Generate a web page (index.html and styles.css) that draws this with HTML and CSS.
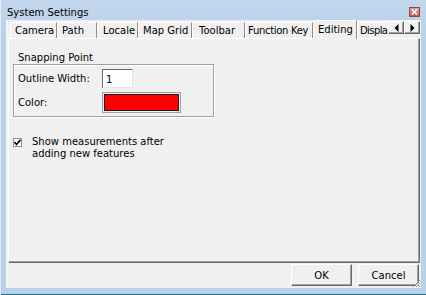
FILE: index.html
```html
<!DOCTYPE html>
<html>
<head>
<meta charset="utf-8">
<link rel="stylesheet" href="styles.css">
</head>
<body>
<div class="window">
  <div class="titlebar">
    <span class="title">System Settings</span>
    <span class="close"><svg width="9" height="8" viewBox="0 0 9 8"><path d="M2 1.5 L7 6.5 M7 1.5 L2 6.5" stroke="#fff" stroke-width="1.6"/></svg></span>
  </div>
  <div class="client">
    <div class="tabstrip">
      <div class="tab t-camera">Camera</div>
      <div class="tab t-path">Path</div>
      <div class="tab t-locale">Locale</div>
      <div class="tab t-map">Map Grid</div>
      <div class="tab t-toolbar">Toolbar</div>
      <div class="tab t-fkey">Function Key</div>
      <div class="tab active t-edit">Editing</div>
      <div class="tab t-disp">Displa</div>
      <div class="scroller">
        <span class="arrow"><svg width="5" height="8" viewBox="0 0 5 8"><path d="M4.5 0 L0.5 4 L4.5 8 Z" fill="#000"/></svg></span>
        <span class="arrow"><svg width="5" height="8" viewBox="0 0 5 8"><path d="M0.5 0 L4.5 4 L0.5 8 Z" fill="#000"/></svg></span>
      </div>
    </div>
    <div class="panel">
      <div class="group-label">Snapping Point</div>
      <div class="group">
        <div class="row">
          <span class="field-label">Outline Width:</span>
          <span class="input">1</span>
        </div>
        <div class="row">
          <span class="field-label">Color:</span>
          <span class="swatch"><span class="swatch-fill"></span></span>
        </div>
      </div>
      <div class="check-row">
        <span class="checkbox"><svg width="7" height="7" viewBox="0 0 7 7"><path d="M0.5 3 L2.5 5.5 L6.5 0.8" stroke="#000" stroke-width="1.6" fill="none"/></svg></span>
        <span class="check-text">Show measurements after<br>adding new features</span>
      </div>
    </div>
    <div class="footer">
      <span class="btn">OK</span>
      <span class="btn">Cancel</span>
    </div>
    <svg class="grip" width="9" height="9" viewBox="0 0 9 9">
      <path d="M8 1 L1 8 M8 4 L4 8 M8 7 L7 8" stroke="#a0a0a0" stroke-width="1"/>
      <path d="M9 2 L2 9 M9 5 L5 9" stroke="#fff" stroke-width="1"/>
    </svg>
  </div>
  <div class="bottom-edge"></div>
</div>
</body>
</html>
```

FILE: styles.css
```css
html, body {
  margin: 0;
  padding: 0;
  background: #b9d1ea;
}
body {
  font-family: "DejaVu Sans", "Liberation Sans", sans-serif;
  font-size: 10px;
  color: #000;
}
.window {
  width: 426px;
  height: 295px;
  background: linear-gradient(#c2d6ec, #b9d1ea 40px);
  display: flex;
  flex-direction: column;
  box-sizing: border-box;
  border-left: 1px solid #e4edf7;
}
.titlebar {
  height: 19px;
  display: flex;
  align-items: center;
  justify-content: space-between;
  padding: 0 6px 0 6px;
}
.title {
  font-size: 10px;
  color: #000;
  margin-top: 6px;
}
.close {
  width: 11px;
  height: 10px;
  box-sizing: border-box;
  border: 1px solid #8d4a47;
  background: linear-gradient(#e0a39b, #c6574f);
  display: flex;
  align-items: center;
  justify-content: center;
  margin-top: 5px;
}
.client {
  position: relative;
  flex: 1;
  margin: 1px 5px 0 5px;
  background: #f0f0f0;
  border-left: 1px solid #fbfbfb;
  display: flex;
  flex-direction: column;
}
.tabstrip {
  height: 18px;
  display: flex;
  align-items: flex-end;
  padding-left: 3px;
  position: relative;
  z-index: 1;
}
.tab {
  box-sizing: border-box;
  height: 16px;
  border-top: 1px solid #fff;
  border-left: 1px solid #fff;
  border-right: 1px solid #8a8a8a;
  padding: 1px 0 0 4px;
  line-height: 13px;
  white-space: nowrap;
  overflow: hidden;
}
.t-camera { width: 47px; }
.t-path { width: 40px; }
.t-locale { width: 41px; padding-left: 5px; }
.t-map { width: 54px; }
.t-toolbar { width: 53px; padding-left: 6px; }
.t-fkey { width: 68px; padding-left: 2px; letter-spacing: -0.3px; }
.t-edit { width: 44px; }
.t-disp { width: 31px; border-right: none; padding-left: 2px; letter-spacing: -0.6px; }
.tab.active {
  height: 19px;
  margin-bottom: -1px;
  background: #f0f0f0;
  padding-top: 2px;
}
.scroller {
  display: flex;
  align-self: flex-start;
  margin-top: 1px;
}
.arrow {
  box-sizing: border-box;
  width: 16px;
  height: 13px;
  border-top: 1px solid #fff;
  border-left: 1px solid #fff;
  border-right: 1px solid #696969;
  border-bottom: 1px solid #696969;
  box-shadow: inset -1px -1px 0 #a0a0a0;
  display: flex;
  align-items: center;
  justify-content: center;
  background: #f0f0f0;
}
.panel {
  box-sizing: border-box;
  height: 224px;
  margin: 0 2px 0 1px;
  border-top: 1px solid #fff;
  border-left: 1px solid #fff;
  border-right: 1px solid #a0a0a0;
  border-bottom: 1px solid #a0a0a0;
  box-shadow: 1px 1px 0 #696969;
  padding: 12px 0 0 4px;
}
.group-label {
  padding-left: 5px;
  height: 13px;
  line-height: 13px;
}
.group {
  box-sizing: border-box;
  width: 201px;
  border: 1px solid #a0a0a0;
  box-shadow: inset 1px 1px 0 #fff, 1px 1px 0 #fff;
  padding: 4px 0 3px 4px;
  display: flex;
  flex-direction: column;
  gap: 4px;
}
.row {
  display: flex;
  align-items: center;
}
.field-label {
  width: 84px;
}
.input {
  box-sizing: border-box;
  width: 31px;
  height: 19px;
  background: #fff;
  border-top: 1px solid #696969;
  border-left: 1px solid #696969;
  border-right: 1px solid #e3e3e3;
  border-bottom: 1px solid #e3e3e3;
  padding: 3px 0 0 3px;
  line-height: 13px;
}
.swatch {
  box-sizing: border-box;
  width: 79px;
  height: 21px;
  border: 1px solid #a0a0a0;
  padding: 1px;
  display: flex;
}
.swatch-fill {
  flex: 1;
  background: #ff0000;
  border: 1px solid #1e1e1e;
}
.check-row {
  display: flex;
  align-items: flex-start;
  margin-top: 19px;
  padding-left: 0;
}
.checkbox {
  box-sizing: border-box;
  width: 9px;
  height: 9px;
  margin-top: 2px;
  border: 1px solid #8e8f8f;
  background: #fff;
  display: flex;
  align-items: center;
  justify-content: center;
}
.check-text {
  margin-left: 10px;
  line-height: 12px;
}
.footer {
  display: flex;
  justify-content: flex-end;
  gap: 6px;
  padding: 2px 2px 0 0;
}
.btn {
  box-sizing: border-box;
  width: 61px;
  height: 22px;
  border-top: 1px solid #fff;
  border-left: 1px solid #fff;
  border-right: 1px solid #696969;
  border-bottom: 1px solid #696969;
  box-shadow: inset -1px -1px 0 #a0a0a0;
  display: flex;
  align-items: center;
  justify-content: center;
}
.grip {
  position: absolute;
  right: 0;
  bottom: 0;
}
.bottom-edge {
  height: 7px;
  border-bottom: 1px solid #2b6a83;
  box-sizing: border-box;
}
```
